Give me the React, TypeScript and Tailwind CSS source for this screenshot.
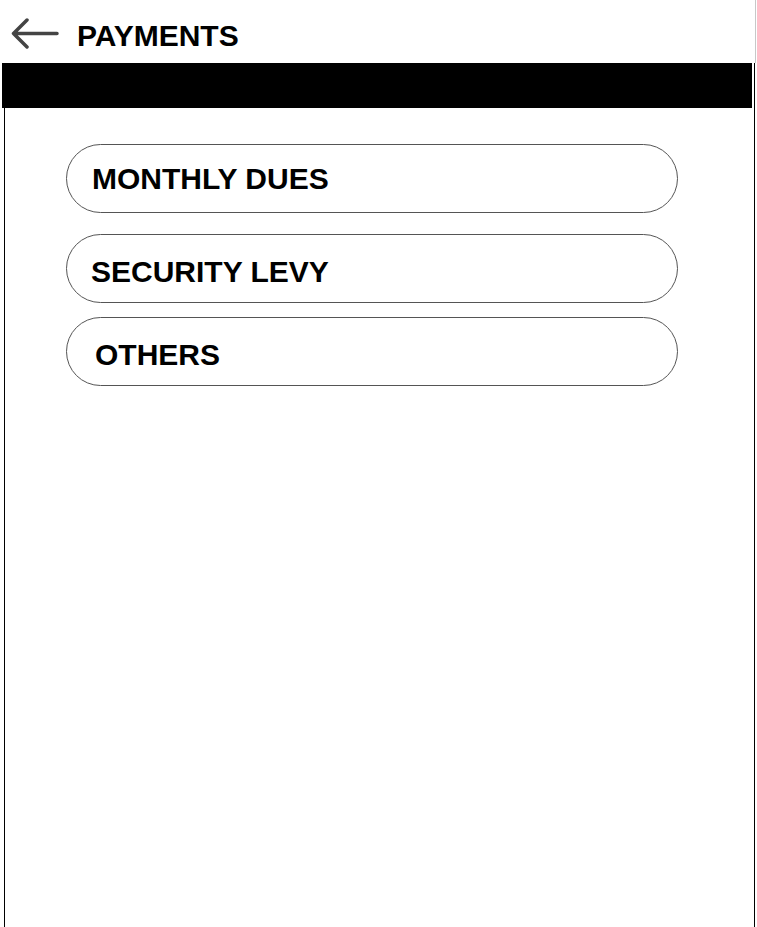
import React from "react";

const items = [
  { label: "MONTHLY DUES", mt: "mt-[36px]", pl: "pl-[25px]", pt: "pt-0" },
  { label: "SECURITY LEVY", mt: "mt-[21px]", pl: "pl-[24px]", pt: "pt-[6px]" },
  { label: "OTHERS", mt: "mt-[14px]", pl: "pl-[28px]", pt: "pt-[6px]" },
];

export default function App() {
  return (
    <div
      className="w-[757px] h-[927px] overflow-hidden bg-white"
      style={{ fontFamily: '"Liberation Sans", Arial, sans-serif' }}
    >
      <div className="w-[756px] h-[63px] border-r border-[#c8c8c8] flex items-center">
        <svg width="48" height="32" viewBox="0 0 48 32" className="ml-[11px] mt-[4px]">
          <path
            d="M2.5 15.5 H46 M16 2 L2.5 15.5 L16 29"
            fill="none"
            stroke="#444"
            strokeWidth="3.5"
            strokeLinecap="round"
            strokeLinejoin="round"
          />
        </svg>
        <span className="ml-[18px] mt-[9px] text-[30px] font-bold text-black leading-none">
          PAYMENTS
        </span>
      </div>
      <div className="ml-[4px] w-[751px] h-[870px] mt-[3px] border-x border-black">
        <div className="-ml-[3px] -mt-[3px] w-[750px] h-[45px] bg-black" />
        {items.map((it) => (
          <div
            key={it.label}
            className={`${it.mt} ml-[61px] w-[612px] h-[69px] rounded-full border border-[#555] flex items-center ${it.pl} ${it.pt}`}
          >
            <span className="text-[30px] font-bold text-black leading-none">{it.label}</span>
          </div>
        ))}
      </div>
    </div>
  );
}
